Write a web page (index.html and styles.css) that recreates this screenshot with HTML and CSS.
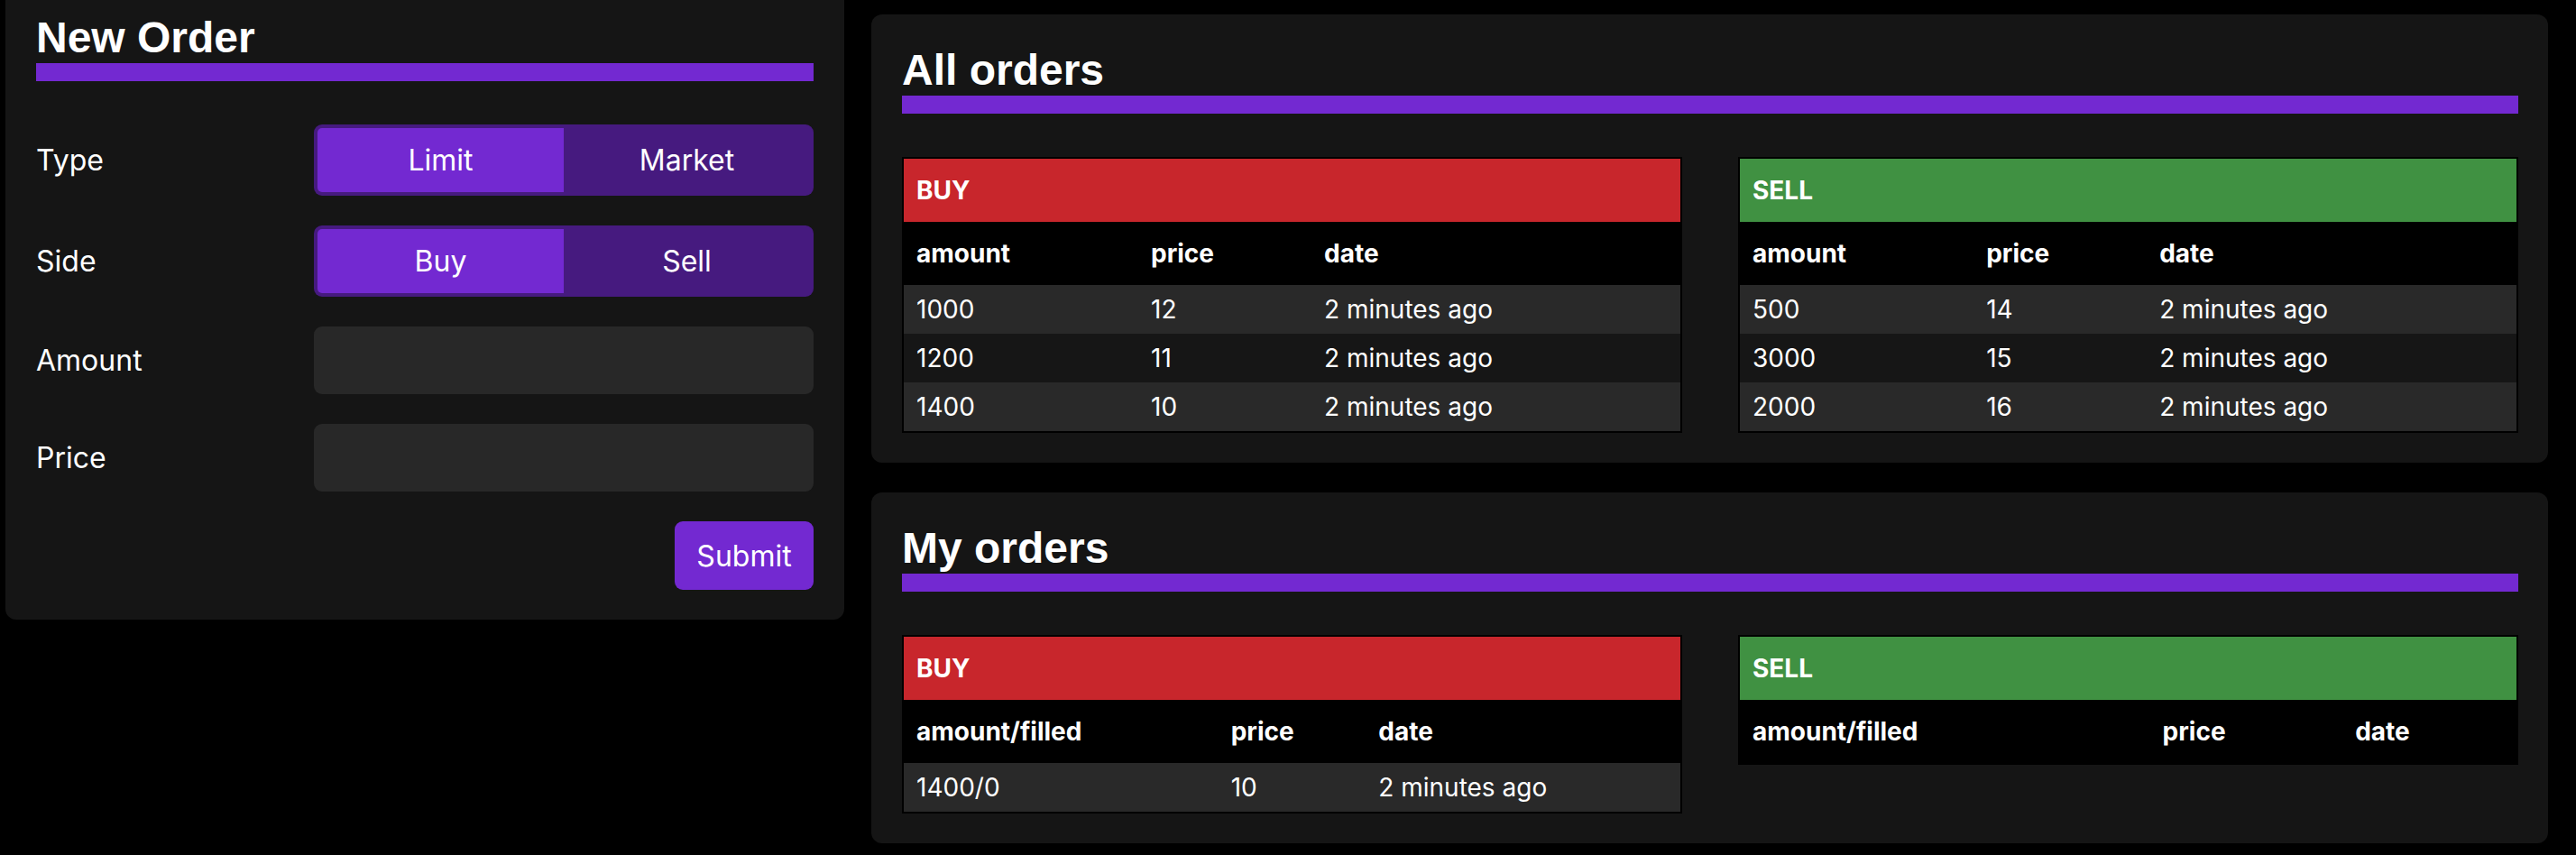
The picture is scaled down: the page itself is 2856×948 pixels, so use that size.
FILE: index.html
```html
<!DOCTYPE html>
<html lang="en">
<head>
<meta charset="utf-8">
<title>Orders</title>
<link rel="stylesheet" href="styles.css">
</head>
<body>
<div class="page">
  <section class="panel new-order">
    <h2 class="title">New Order</h2>
    <div class="bar"></div>
    <form class="form">
      <label class="label">Type</label>
      <div class="toggle">
        <button type="button" class="opt active">Limit</button>
        <button type="button" class="opt">Market</button>
      </div>
      <label class="label">Side</label>
      <div class="toggle">
        <button type="button" class="opt active">Buy</button>
        <button type="button" class="opt">Sell</button>
      </div>
      <label class="label">Amount</label>
      <input class="field" type="text">
      <label class="label">Price</label>
      <input class="field" type="text">
      <div class="actions">
        <button type="button" class="submit">Submit</button>
      </div>
    </form>
  </section>

  <div class="right">
    <section class="panel">
      <h2 class="title">All orders</h2>
      <div class="bar"></div>
      <div class="tables">
        <table class="book">
          <colgroup><col class="c-a1"><col class="c-p1"><col class="c-d1"></colgroup>
          <thead>
            <tr><th colspan="3" class="side buy">BUY</th></tr>
            <tr class="cols"><th>amount</th><th>price</th><th>date</th></tr>
          </thead>
          <tbody>
            <tr><td>1000</td><td>12</td><td>2 minutes ago</td></tr>
            <tr><td>1200</td><td>11</td><td>2 minutes ago</td></tr>
            <tr><td>1400</td><td>10</td><td>2 minutes ago</td></tr>
          </tbody>
        </table>
        <table class="book">
          <colgroup><col class="c-a2"><col class="c-p2"><col class="c-d2"></colgroup>
          <thead>
            <tr><th colspan="3" class="side sell">SELL</th></tr>
            <tr class="cols"><th>amount</th><th>price</th><th>date</th></tr>
          </thead>
          <tbody>
            <tr><td>500</td><td>14</td><td>2 minutes ago</td></tr>
            <tr><td>3000</td><td>15</td><td>2 minutes ago</td></tr>
            <tr><td>2000</td><td>16</td><td>2 minutes ago</td></tr>
          </tbody>
        </table>
      </div>
    </section>

    <section class="panel">
      <h2 class="title">My orders</h2>
      <div class="bar"></div>
      <div class="tables">
        <table class="book">
          <colgroup><col class="c-a3"><col class="c-p3"><col class="c-d3"></colgroup>
          <thead>
            <tr><th colspan="3" class="side buy">BUY</th></tr>
            <tr class="cols"><th>amount/filled</th><th>price</th><th>date</th></tr>
          </thead>
          <tbody>
            <tr><td>1400/0</td><td>10</td><td>2 minutes ago</td></tr>
          </tbody>
        </table>
        <table class="book">
          <colgroup><col class="c-a4"><col class="c-p4"><col class="c-d4"></colgroup>
          <thead>
            <tr><th colspan="3" class="side sell">SELL</th></tr>
            <tr class="cols"><th>amount/filled</th><th>price</th><th>date</th></tr>
          </thead>
          <tbody></tbody>
        </table>
      </div>
    </section>
  </div>
</div>
</body>
</html>
```

FILE: styles.css
```css
html, body {
  margin: 0;
  padding: 0;
  background: #000;
}

body {
  font-family: Inter, "Noto Sans", sans-serif;
  color: #fff;
  font-size: 32px;
}

.page {
  display: flex;
  align-items: flex-start;
  gap: 30px;
  padding: 16px 31px 12px 6px;
}

.panel {
  background: #151515;
  border-radius: 12px;
  padding: 34px 33px 33px 34px;
}

.new-order {
  width: 930px;
  box-sizing: border-box;
  flex: none;
  margin-top: -36px;
  padding-right: 34px;
}

.right {
  flex: 1;
  display: flex;
  flex-direction: column;
  gap: 33px;
}

.title {
  margin: 0;
  font-family: "Liberation Sans", Arial, sans-serif;
  font-weight: 700;
  font-size: 48px;
  line-height: 56px;
  color: #fff;
}

.bar {
  height: 20px;
  background: #7329d1;
}

/* form */
.form {
  margin-top: 48px;
  display: grid;
  grid-template-columns: 308px 1fr;
  row-gap: 33px;
  align-items: center;
}

.label {
  font-size: 32px;
  color: #fff;
}

.toggle {
  display: flex;
  height: 79px;
  box-sizing: border-box;
  padding: 4px;
  background: #461a7f;
  border-radius: 9px;
}

.opt {
  flex: 1;
  border: none;
  margin: 0;
  background: transparent;
  color: #fff;
  font-family: Inter, "Noto Sans", sans-serif;
  font-size: 32px;
  border-radius: 5px;
}

.opt.active {
  background: #7329d1;
  border-radius: 5px 0 0 5px;
}

.field {
  height: 75px;
  box-sizing: border-box;
  border: none;
  border-radius: 9px;
  background: #282828;
  width: 100%;
  margin: 0;
  padding: 0 16px;
  color: #fff;
  font-size: 32px;
}

.actions {
  grid-column: 1 / 3;
  display: flex;
  justify-content: flex-end;
}

.submit {
  height: 76px;
  width: 154px;
  border: none;
  border-radius: 9px;
  background: #7329d1;
  color: #fff;
  font-family: Inter, "Noto Sans", sans-serif;
  font-size: 32px;
  padding: 0;
}

/* tables */
.tables {
  display: flex;
  gap: 62px;
  margin-top: 48px;
  align-items: flex-start;
}

.book {
  flex: 1;
  width: 0;
  border: 2px solid #000;
  border-spacing: 0;
  table-layout: fixed;
  font-size: 28px;
}

.book th,
.book td {
  padding: 0 14px;
  text-align: left;
  white-space: nowrap;
}

.book th.side {
  height: 70px;
  font-weight: 700;
  font-size: 28px;
}

.side.buy { background: #c8262c; }
.side.sell { background: #409142; }

.cols th {
  height: 70px;
  background: #000;
  font-weight: 700;
}

.book td {
  height: 54px;
  font-weight: 400;
}

.book tbody tr:nth-child(odd) td { background: #292929; }
.book tbody tr:nth-child(even) td { background: #161616; }

.c-a1 { width: 30.2%; }
.c-p1 { width: 22.3%; }
.c-d1 { width: 47.5%; }

.c-a2 { width: 30.1%; }
.c-p2 { width: 22.3%; }
.c-d2 { width: 47.6%; }

.c-a3 { width: 40.5%; }
.c-p3 { width: 19.0%; }
.c-d3 { width: 40.5%; }

.c-a4 { width: 52.8%; }
.c-p4 { width: 24.8%; }
.c-d4 { width: 22.4%; }
```
